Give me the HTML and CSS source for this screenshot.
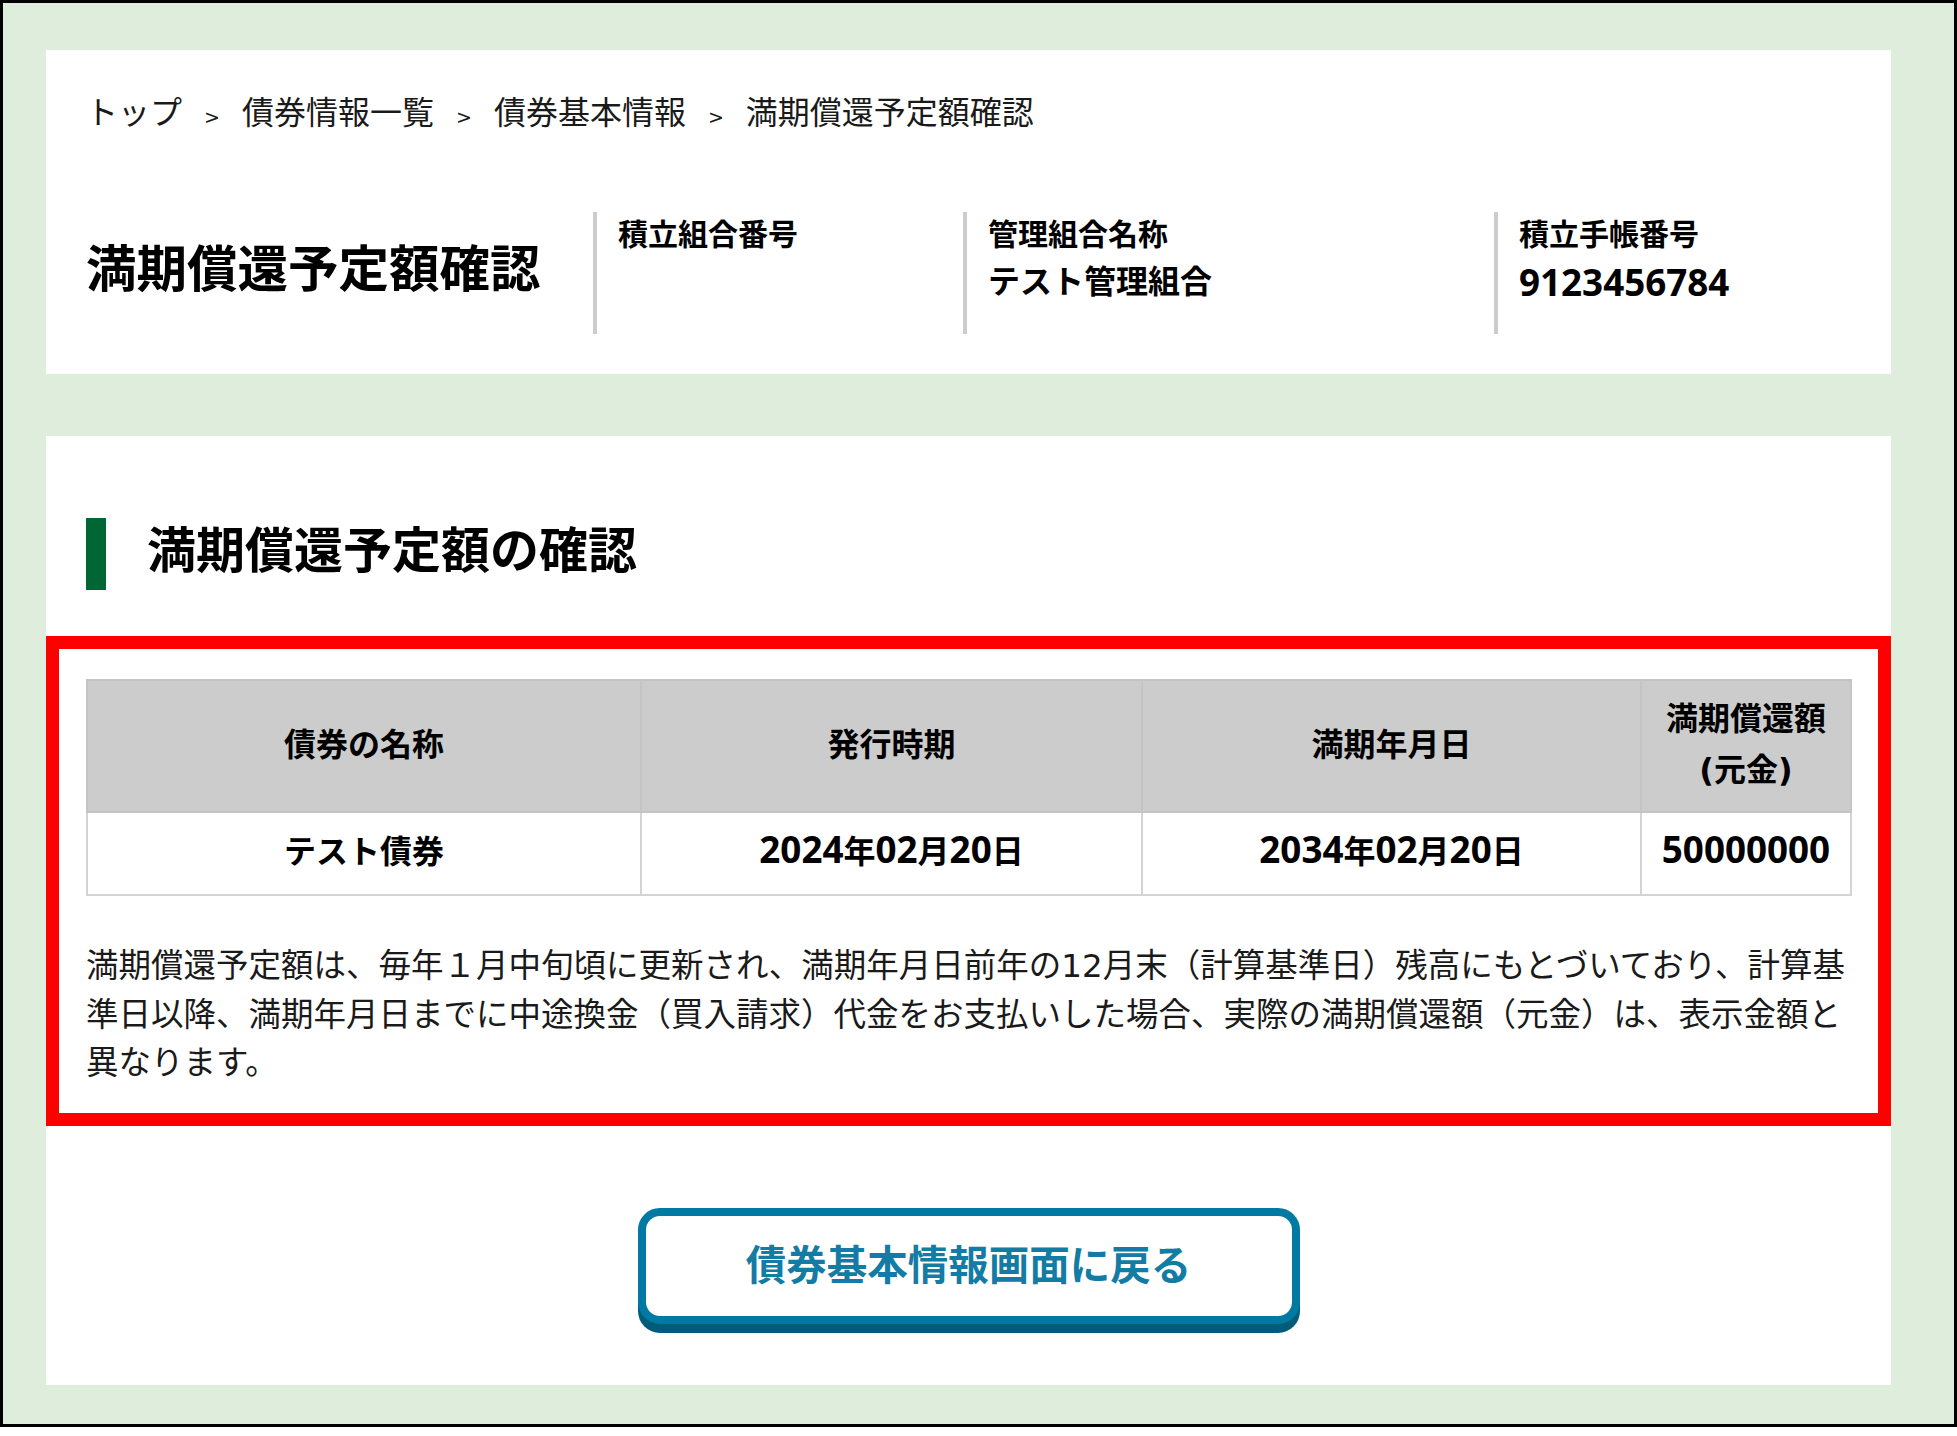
FILE: index.html
```html
<!DOCTYPE html>
<html lang="ja">
<head>
<meta charset="utf-8">
<title>満期償還予定額確認</title>
<link rel="stylesheet" href="styles.css">
</head>
<body>
<div class="frame">
  <section class="panel panel-top">
    <nav class="breadcrumb">
      <span class="crumb">トップ</span><span class="sep">&gt;</span><span class="crumb">債券情報一覧</span><span class="sep">&gt;</span><span class="crumb">債券基本情報</span><span class="sep">&gt;</span><span class="crumb">満期償還予定額確認</span>
    </nav>
    <div class="summary">
      <h1 class="page-title">満期償還予定額確認</h1>
      <div class="info info-1">
        <div class="info-label">積立組合番号</div>
        <div class="info-value"></div>
      </div>
      <div class="info info-2">
        <div class="info-label">管理組合名称</div>
        <div class="info-value">テスト管理組合</div>
      </div>
      <div class="info info-3">
        <div class="info-label">積立手帳番号</div>
        <div class="info-value info-number"><span class="num">9123456784</span></div>
      </div>
    </div>
  </section>

  <section class="panel panel-main">
    <h2 class="section-title"><span class="bar"></span><span class="section-text">満期償還予定額の確認</span></h2>
    <div class="highlight">
      <table class="bond-table">
        <colgroup>
          <col class="col-name"><col class="col-issue"><col class="col-maturity"><col class="col-amount">
        </colgroup>
        <thead>
          <tr><th>債券の名称</th><th>発行時期</th><th>満期年月日</th><th>満期償還額(元金)</th></tr>
        </thead>
        <tbody>
          <tr>
            <td>テスト債券</td>
            <td><span class="num">2024</span>年<span class="num">02</span>月<span class="num">20</span>日</td>
            <td><span class="num">2034</span>年<span class="num">02</span>月<span class="num">20</span>日</td>
            <td><span class="num">50000000</span></td>
          </tr>
        </tbody>
      </table>
      <p class="note">満期償還予定額は、毎年１月中旬頃に更新され、満期年月日前年の12月末（計算基準日）残高にもとづいており、計算基<br>準日以降、満期年月日までに中途換金（買入請求）代金をお支払いした場合、実際の満期償還額（元金）は、表示金額と<br>異なります。</p>
    </div>
    <div class="actions">
      <button class="back-btn" type="button">債券基本情報画面に戻る</button>
    </div>
  </section>
</div>
</body>
</html>
```

FILE: styles.css
```css
html, body {
  margin: 0;
  padding: 0;
  background: #ffffff;
}

body {
  font-family: "DejaVu Sans", "Noto Sans CJK JP", sans-serif;
  color: #111111;
}

.frame {
  width: 1957px;
  height: 1427px;
  box-sizing: border-box;
  border: 3px solid #000000;
  background: #dfeedc;
  padding: 47px 63px 0 43px;
}

.panel {
  background: #ffffff;
}

.panel-top {
  padding: 36px 40px 40px;
}

.breadcrumb {
  display: flex;
  align-items: baseline;
  height: 50px;
  overflow: hidden;
  font-size: 32px;
  line-height: 48px;
  color: #1a1a1a;
}

.crumb {
  font-family: "Noto Sans CJK JP", sans-serif;
}

.sep {
  font-size: 19px;
  line-height: 20px;
  margin: 0 22px;
}

.summary {
  display: flex;
  height: 122px;
  margin-top: 76px;
}

.page-title {
  flex: none;
  width: 507px;
  margin: 0;
  align-self: center;
  padding-bottom: 6px;
  font-size: 50.5px;
  line-height: 60px;
  font-weight: 700;
  color: #000000;
}

.info {
  box-sizing: border-box;
  border-left: 4px solid #cccccc;
  padding-left: 21px;
  font-weight: 700;
  color: #000000;
}

.info-1 { flex: none; width: 370px; }
.info-2 { flex: none; width: 531px; }
.info-3 { flex: 1; }

.info-label {
  font-size: 30px;
  line-height: 45px;
}

.info-value {
  margin-top: 2px;
  height: 46px;
  font-size: 32px;
  line-height: 46px;
}

.info-number {
  padding-top: 3px;
  height: 43px;
}

.num {
  font-family: "Open Sans", "DejaVu Sans", sans-serif;
  font-size: 1.15em;
  font-weight: 700;
  line-height: 1;
}

.panel-main {
  margin-top: 62px;
  padding: 82px 40px 61px;
}

.section-title {
  display: flex;
  align-items: center;
  margin: 0;
  height: 72px;
}

.bar {
  flex: none;
  width: 20px;
  height: 72px;
  background: #006633;
}

.section-text {
  margin-left: 41px;
  padding-bottom: 4px;
  font-size: 49px;
  line-height: 64px;
  font-weight: 700;
  color: #000000;
}

.highlight {
  margin: 46px -40px 0;
  border: 13px solid #ff0000;
  padding: 30px 28px 23px 27px;
}

.bond-table {
  width: 1764px;
  table-layout: fixed;
  border-collapse: collapse;
  font-weight: 700;
  color: #000000;
}

.col-name { width: 554px; }
.col-issue { width: 501px; }
.col-maturity { width: 499px; }
.col-amount { width: 210px; }

.bond-table th,
.bond-table td {
  border: 2px solid #d4d4d4;
  padding: 13px 8px 15px;
  text-align: center;
  vertical-align: middle;
  font-size: 32px;
  line-height: 51px;
}

.bond-table th {
  background: #cccccc;
  border-color: #c4c4c4;
}

.bond-table td {
  background: #ffffff;
  padding: 14px 8px 16px;
}

.note {
  margin: 46px 0 0;
  padding-bottom: 2px;
  font-size: 32.5px;
  line-height: 48.5px;
  white-space: nowrap;
  color: #1a1a1a;
}

.actions {
  display: flex;
  justify-content: center;
  margin-top: 82px;
}

.back-btn {
  width: 662px;
  height: 116px;
  box-sizing: border-box;
  border: 8px solid #0079a3;
  border-radius: 22px;
  background: #ffffff;
  box-shadow: 0 9px 0 #015b79;
  padding: 0 0 6px;
  font-family: "Noto Sans CJK JP", sans-serif;
  font-size: 40.5px;
  font-weight: 700;
  color: #137ca4;
  cursor: pointer;
}
```
